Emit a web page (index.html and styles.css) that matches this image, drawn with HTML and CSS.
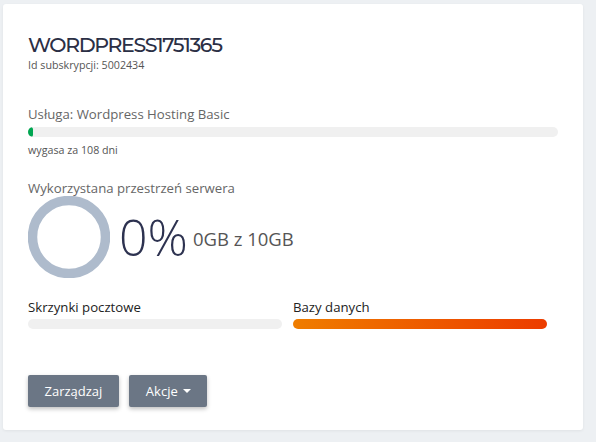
FILE: index.html
```html
<!DOCTYPE html>
<html lang="pl">
<head>
<meta charset="utf-8">
<link rel="stylesheet" href="styles.css">
</head>
<body>
<div class="card">
  <h1 class="title">WORDPRESS1751365</h1>
  <div class="subid">Id subskrypcji: 5002434</div>

  <div class="service">
    <div class="label">Usługa: Wordpress Hosting Basic</div>
    <div class="bar"><div class="fill green" style="width:5px"></div></div>
    <div class="small">wygasa za 108 dni</div>
  </div>

  <div class="space">
    <div class="label">Wykorzystana przestrzeń serwera</div>
    <div class="usage">
      <svg class="donut" width="82" height="82" viewBox="0 0 82 82">
        <circle cx="41" cy="41" r="36.5" fill="none" stroke="#aebbcc" stroke-width="9.5"/>
      </svg>
      <span class="pct">0%</span>
      <span class="gb">0GB z 10GB</span>
    </div>
  </div>

  <div class="pair">
    <div class="col">
      <div class="label dark">Skrzynki pocztowe</div>
      <div class="bar"></div>
    </div>
    <div class="col">
      <div class="label dark">Bazy danych</div>
      <div class="bar orange"></div>
    </div>
  </div>

  <div class="buttons">
    <button class="btn">Zarządzaj</button>
    <button class="btn btn-akcje">Akcje <span class="caret"></span></button>
  </div>
</div>
</body>
</html>
```

FILE: styles.css
```css
html, body {
  margin: 0;
  padding: 0;
  background: #edf0f3;
}
body {
  padding: 4px 13px 12px 3px;
  font-family: "Open Sans", "Noto Sans", sans-serif;
}
.card {
  background: #fff;
  border-radius: 3px;
  box-shadow: 0 1px 3px rgba(0,0,0,0.06);
  height: 426px;
  box-sizing: border-box;
  padding: 28px 25px 0 25px;
}
.title {
  margin: 0;
  font-family: "Montserrat", "Open Sans", sans-serif;
  font-weight: 500;
  font-size: 20.5px;
  line-height: 26px;
  color: #2b2f45;
  letter-spacing: -1.35px;
}
.subid {
  font-size: 10.7px;
  line-height: 14px;
  color: #555;
  margin-top: 0;
}
.service {
  margin-top: 33px;
  width: 530px;
}
.label {
  font-size: 13.2px;
  line-height: 18px;
  color: #666;
}
.label.dark {
  color: #222;
}
.bar {
  height: 10px;
  border-radius: 5px;
  background: #f0f0f0;
  margin-top: 4px;
  overflow: hidden;
}
.fill {
  height: 100%;
  border-radius: 5px;
}
.green {
  background: #00a651;
}
.orange {
  background: linear-gradient(to right, #ef7d00, #ec3c00);
}
.small {
  font-size: 10.7px;
  line-height: 14px;
  color: #555;
  margin-top: 6px;
}
.space {
  margin-top: 22px;
}
.usage {
  display: flex;
  align-items: center;
  margin-top: -1px;
}
.donut {
  display: block;
}
.pct {
  font-size: 50px;
  font-weight: 300;
  color: #2d3250;
  line-height: 50px;
  margin-left: 9px;
}
.gb {
  font-size: 18.5px;
  color: #555;
  margin-left: 5px;
  margin-top: 3px;
}
.pair {
  display: flex;
  gap: 11px;
  margin-top: 20px;
}
.col {
  width: 254px;
}
.col .bar {
  margin-top: 3px;
}
.buttons {
  display: flex;
  gap: 10px;
  margin-top: 46px;
}
.btn {
  font-family: "Open Sans", "Noto Sans", sans-serif;
  font-size: 13px;
  color: #fff;
  background: #6b7685;
  border: none;
  border-radius: 2px;
  height: 32px;
  padding: 0 16.5px;
  box-shadow: 0 2px 4px rgba(0,0,0,0.25);
  display: flex;
  align-items: center;
}
.btn-akcje {
  padding: 0 16px 0 17px;
}
.caret {
  display: inline-block;
  width: 0;
  height: 0;
  border-left: 4px solid transparent;
  border-right: 4px solid transparent;
  border-top: 4px solid #fff;
  margin-left: 5px;
}
```
